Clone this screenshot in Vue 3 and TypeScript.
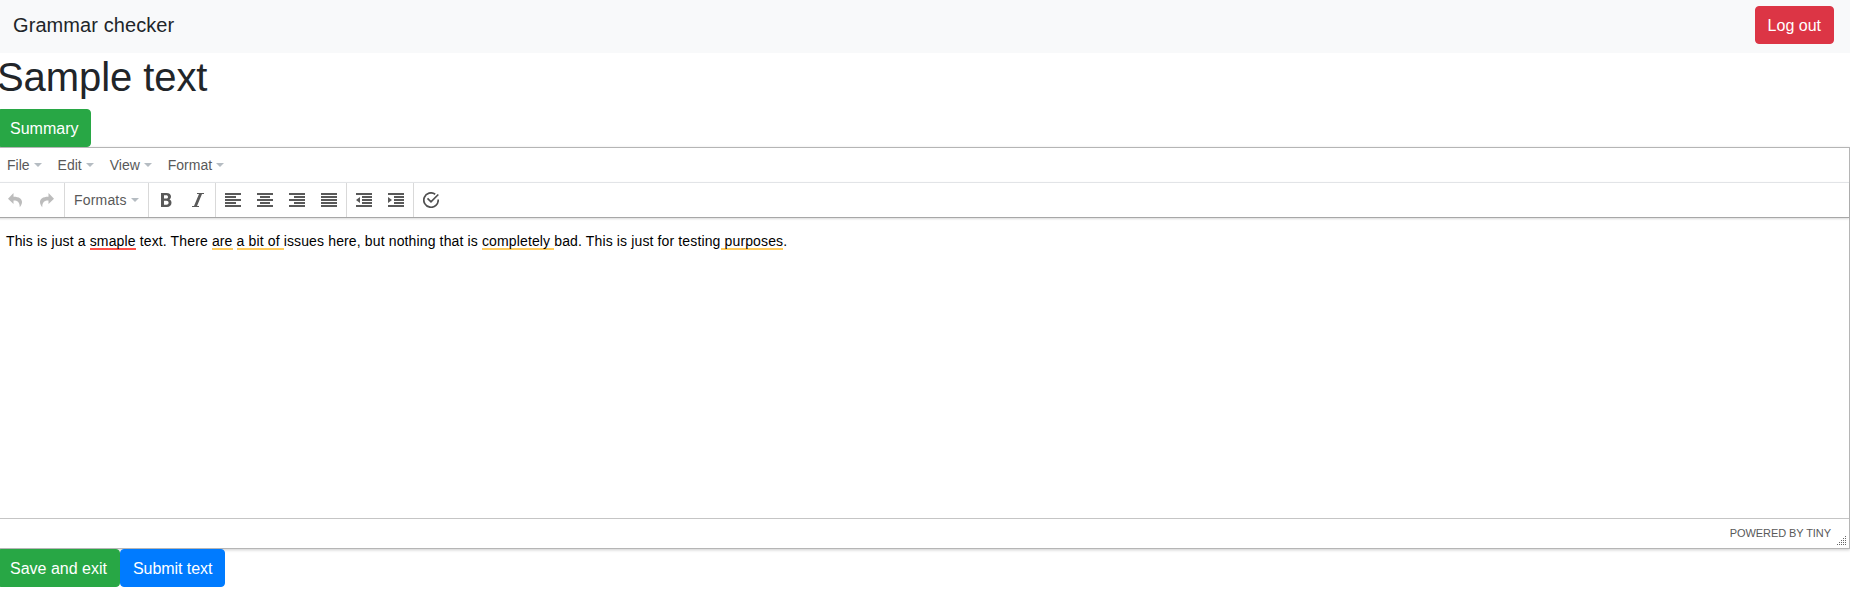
<script setup lang="ts">
interface MenuItem { label: string }
interface Run { text: string; mark?: 'spelling' | 'grammar' }

const menus: MenuItem[] = [{ label: 'File' }, { label: 'Edit' }, { label: 'View' }, { label: 'Format' }]

const lines = {
  left: 'M0 0h16v2H0zM0 3h11v2H0zM0 6h16v2H0zM0 9h11v2H0zM0 12h16v2H0z',
  center: 'M0 0h16v2H0zM3 3h10v2H3zM0 6h16v2H0zM3 9h10v2H3zM0 12h16v2H0z',
  right: 'M0 0h16v2H0zM5 3h11v2H5zM0 6h16v2H0zM5 9h11v2H5zM0 12h16v2H0z',
  justify: 'M0 0h16v2H0zM0 3h16v2H0zM0 6h16v2H0zM0 9h16v2H0zM0 12h16v2H0z',
}
const indents = {
  outdent: 'M0 0h16v2H0zM6 3h10v2H6zM6 6h10v2H6zM6 9h10v2H6zM0 12h16v2H0zM4 4v6L0 7z',
  indent: 'M0 0h16v2H0zM6 3h10v2H6zM6 6h10v2H6zM6 9h10v2H6zM0 12h16v2H0zM0 4v6l4-3z',
}

const runs: Run[] = [
  { text: 'This is just a ' },
  { text: 'smaple', mark: 'spelling' },
  { text: ' text. There ' },
  { text: 'are', mark: 'grammar' },
  { text: ' ' },
  { text: 'a bit of ', mark: 'grammar' },
  { text: 'issues here, but nothing that is ' },
  { text: 'completely ', mark: 'grammar' },
  { text: 'bad. This is just for testing' },
  { text: ' purposes', mark: 'grammar' },
  { text: '.' },
]
</script>

<template>
  <div class="page">
    <nav class="navbar">
      <span class="brand">Grammar checker</span>
      <button class="btn danger">Log out</button>
    </nav>
    <h1>Sample text</h1>
    <div class="actions"><button class="btn success">Summary</button></div>
    <section class="editor">
      <div class="menubar">
        <button v-for="m in menus" :key="m.label" class="menu">{{ m.label }}<i class="caret" /></button>
      </div>
      <div class="toolbar">
        <div class="group">
          <button class="tool disabled"><svg viewBox="0 0 16 16"><path d="M6.500 1L1 6.700 6.500 12V8.600C10 8.400 13 10 12.700 15.300 17 10 15.500 4.700 6.500 4.700z" /></svg></button>
          <button class="tool disabled"><svg viewBox="0 0 16 16"><path d="M9.500 1L15 6.700 9.500 12V8.600C6 8.400 3 10 3.300 15.300-1 10 .5 4.700 9.500 4.700z" /></svg></button>
        </div>
        <div class="group formats"><button class="menu">Formats<i class="caret" /></button></div>
        <div class="group">
          <button class="tool"><svg viewBox="0 0 16 16"><path fill-rule="evenodd" d="M3 1h5.500C11.500 1 13 2.500 13 4.600c0 1.300-.6 2.300-1.600 2.900 1.500.5 2.100 1.700 2.100 3.300 0 2.600-1.800 4.200-4.500 4.200H3zM6 3.200v3.400h2c1.300 0 2-.6 2-1.700s-.7-1.700-2-1.700zM6 8.700v4.100h2.400c1.400 0 2.200-.7 2.200-2s-.8-2.100-2.200-2.100z" /></svg></button>
          <button class="tool"><svg viewBox="0 0 16 16"><path d="M14 1v1h-2L7 14h2v1H2v-1h2L9 2H7V1z" /></svg></button>
        </div>
        <div class="group">
          <button v-for="(d, name) in lines" :key="name" class="tool"><svg viewBox="0 -1 16 16"><path :d="d" /></svg></button>
        </div>
        <div class="group">
          <button v-for="(d, name) in indents" :key="name" class="tool"><svg viewBox="0 -1 16 16"><path :d="d" /></svg></button>
        </div>
        <div class="group last">
          <button class="tool"><svg viewBox="0 0 16 16"><path class="stroke" d="M12.200 2.200A7.200 7.200 0 1 0 15.200 7.500M4.500 6.300 8 9.800l7.300-7.300" /></svg></button>
        </div>
      </div>
      <div class="content">
        <p><span v-for="(r, i) in runs" :key="i" :class="r.mark">{{ r.text }}</span></p>
      </div>
      <footer class="status">
        <span>POWERED BY TINY</span>
        <svg class="grip" viewBox="0 0 10 10"><path d="M8 0h1v1H8zM6 2h1v1H6zM8 2h1v1H8zM4 4h1v1H4zM6 4h1v1H6zM8 4h1v1H8zM2 6h1v1H2zM4 6h1v1H4zM6 6h1v1H6zM8 6h1v1H8zM0 8h1v1H0zM2 8h1v1H2zM4 8h1v1H4zM6 8h1v1H6zM8 8h1v1H8z" /></svg>
      </footer>
    </section>
    <div class="actions"><button class="btn success">Save and exit</button><button class="btn primary">Submit text</button></div>
  </div>
</template>

<style>
body { margin: 0; overflow: hidden; background: #fff; }
</style>

<style scoped>
* { box-sizing: border-box; }
.page { margin-left: -3px; color: #212529; font: 16px/1.5 "Liberation Sans", Arial, sans-serif; }
button { font-family: inherit; }
.navbar { display: flex; align-items: center; justify-content: space-between; height: 53px; padding: 0 16px 3px; background: #f8f9fa; }
.brand { font-size: 20px; line-height: 30px; letter-spacing: .08px; }
h1 { margin: 0 0 8px; font-size: 40px; font-weight: 400; line-height: 48px; letter-spacing: -.08px; }
.actions { display: flex; }
.btn { height: 38px; padding: 7px 12px 5px; border: 1px solid; border-radius: 4px; font-size: 16px; line-height: 24px; color: #fff; }
.danger { background: #dc3545; border-color: #dc3545; }
.success { background: #28a745; border-color: #28a745; }
.primary { background: #007bff; border-color: #007bff; letter-spacing: -.06px; }
.editor { border: 1px solid #b5b5b5; box-shadow: 0 1px 3px rgba(0, 0, 0, .2); }
.actions { position: relative; }
.menubar { display: flex; gap: 16px; height: 34px; padding-left: 9px; }
.menu { display: flex; align-items: center; padding: 0; border: 0; background: none; color: #595959; font-size: 14px; }
.caret { margin-left: 4px; border: 4px solid transparent; border-top-color: #b5bcc2; border-bottom: 0; }
.toolbar { position: relative; display: flex; height: 36px; border-top: 1px solid #e2e4e7; border-bottom: 1px solid #a7a7a7; box-shadow: 0 1px 2px rgba(0, 0, 0, .15); }
.group { display: flex; align-items: center; padding: 0 1px; border-right: 1px solid #d9d9d9; }
.formats { width: 84px; padding: 0 9px; }
.formats .menu { letter-spacing: .18px; }
.last { border: 0; }
.tool { display: flex; width: 32px; padding: 8px; border: 0; background: none; }
.tool svg { width: 16px; height: 16px; fill: #595959; }
.disabled { opacity: .4; }
.stroke { fill: none; stroke: #505050; stroke-width: 1.700; }
.content { height: 300px; padding: 13px 8px; color: #000; font-size: 14px; line-height: 20px; letter-spacing: .135px; }
.content p { margin: 0; white-space: pre; }
.spelling { box-shadow: 0 1px #ff5148, inset 0 -1px #ff5148; }
.grammar { box-shadow: 0 1px #ffcc5c, inset 0 -1px #ffcc5c; }
.status { display: flex; justify-content: flex-end; align-items: center; height: 30px; border-top: 1px solid #c5c5c5; color: #595959; font-size: 11px; letter-spacing: -.07px; }
.grip { align-self: flex-end; width: 10px; height: 10px; margin: 0 2px 2px 6px; fill: #666; }
</style>
